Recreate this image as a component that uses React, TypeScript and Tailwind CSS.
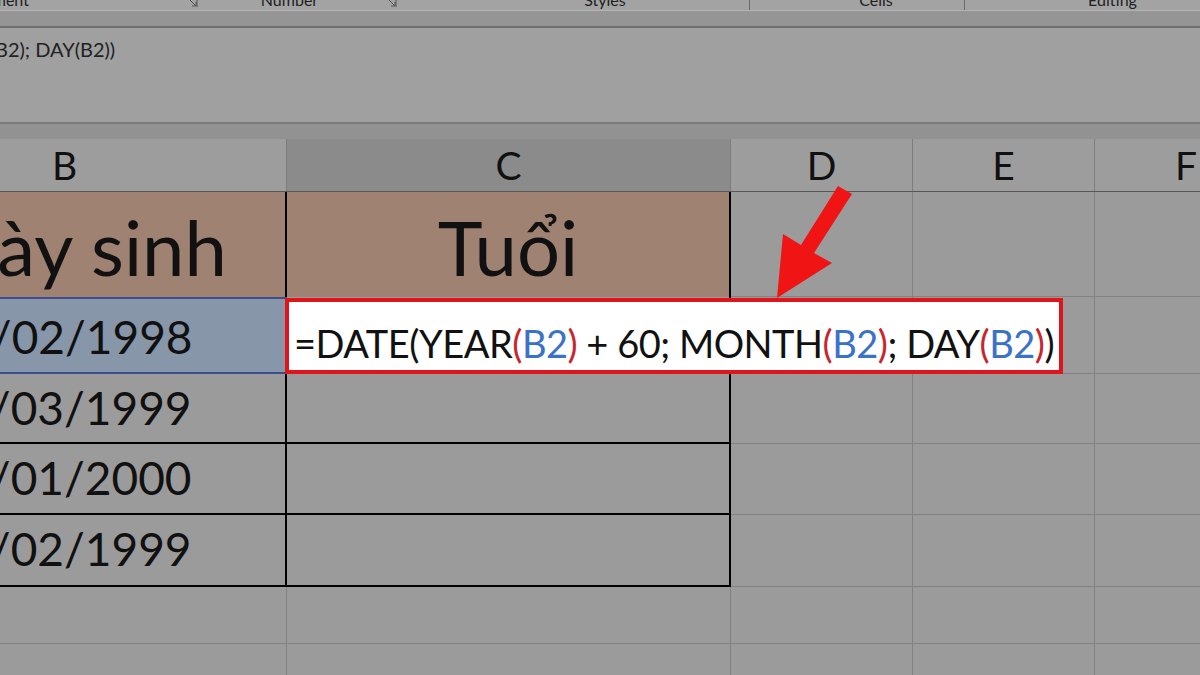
import React from "react";

const R = ({ children }: { children: React.ReactNode }) => (
  <span className="text-[#c8262e]">{children}</span>
);
const Bl = ({ children }: { children: React.ReactNode }) => (
  <span className="text-[#3a72c9]">{children}</span>
);

function Launcher() {
  return (
    <svg width="12" height="12" viewBox="0 0 12 12" className="shrink-0 -mt-[4px]">
      <path d="M1 1 H11 V11" fill="none" stroke="#555" strokeWidth="1" />
      <path d="M4 4 L10 10 M10 6 V10 H6" fill="none" stroke="#555" strokeWidth="1" />
    </svg>
  );
}

function Gray({ w, extra = "" }: { w: string; extra?: string }) {
  return <div className={`${w} shrink-0 border-r border-b border-[#828282] ${extra}`} />;
}

export default function App() {
  const dates = ["15/03/1999", "12/01/2000", "18/02/1999"];
  const heights = ["h-[70px]", "h-[71px]", "h-[72px]"];
  return (
    <div className="relative w-[1200px] h-[675px] overflow-hidden bg-[#9b9b9b] font-['Lato',sans-serif] text-[#111]">
      {/* ribbon group labels */}
      <div className="h-[11px] bg-[#a3a3a3] border-b border-[#b4b4b4] flex overflow-hidden text-[16px] leading-[16px] text-[#1e1e1e]">
        <div className="ml-[-200px] w-[410px] shrink-0 flex items-start">
          <div className="flex-1 text-center -mt-[8px]">Alignment</div>
          <Launcher />
          <div className="w-[12px]" />
        </div>
        <div className="w-[195px] shrink-0 flex items-start">
          <div className="flex-1 text-center -mt-[8px] pr-[16px]">Number</div>
          <Launcher />
          <div className="w-[8px]" />
        </div>
        <div className="w-[345px] shrink-0 flex items-start border-r border-[#6a6a6a]">
          <div className="flex-1 text-center -mt-[8px] pl-[56px]">Styles</div>
        </div>
        <div className="w-[215px] shrink-0 flex items-start border-r border-[#6a6a6a]">
          <div className="flex-1 text-center -mt-[8px] pl-[38px]">Cells</div>
        </div>
        <div className="flex-1 flex items-start">
          <div className="flex-1 text-center -mt-[8px] pl-[60px]">Editing</div>
        </div>
      </div>
      <div className="h-[17px] bg-[#959595] border-b-2 border-[#6e6e6e]" />
      {/* formula bar */}
      <div className="h-[96px] bg-[#a0a0a0] border-b-2 border-[#7a7a7a] pt-[9px] text-[20px] leading-[24px] text-[#222] whitespace-nowrap">
        <div className="ml-[-5px]">B2); DAY(B2))</div>
      </div>
      <div className="h-[15px] bg-[#929292]" />

      {/* grid */}
      <div className="ml-[-157px] flex flex-col">
        {/* column headers */}
        <div className="flex h-[53px] text-[39px] leading-[53px] border-b border-[#575757]">
          <div className="w-[444px] shrink-0 text-center bg-[#9d9d9d] border-r border-[#7e7e7e]">B</div>
          <div className="w-[444px] shrink-0 text-center bg-[#8b8b8b] border-r border-[#7e7e7e]">C</div>
          <div className="w-[182px] shrink-0 text-center bg-[#9d9d9d] border-r border-[#7e7e7e]">D</div>
          <div className="w-[182px] shrink-0 text-center bg-[#9d9d9d] border-r border-[#7e7e7e]">E</div>
          <div className="w-[182px] shrink-0 text-center bg-[#9d9d9d]">F</div>
        </div>
        {/* row 1 */}
        <div className="flex h-[105px] text-[76px] leading-[105px]">
          <div className="w-[444px] shrink-0 bg-[#9f8272] border-r-2 border-black text-center whitespace-nowrap pt-[2px]">Ngày sinh</div>
          <div className="w-[444px] shrink-0 bg-[#9f8272] border-r-2 border-black text-center pt-[2px]">Tuổi</div>
          <Gray w="w-[182px]" />
          <Gray w="w-[182px]" />
          <Gray w="w-[182px]" />
        </div>
        {/* row 2 */}
        <div className="flex h-[77px] text-[46px] leading-[76px]">
          <div className="w-[444px] shrink-0 bg-[#8796a8] border-2 border-[#3c4f8c] text-center whitespace-nowrap">12/02/1998</div>
          <div className="relative w-[444px] shrink-0 border-r-2 border-b-2 border-black">
            <div className="absolute left-[-2px] top-[1px] w-[778px] h-[76px] overflow-hidden bg-white border-4 border-[#e2141b] pl-[5px] whitespace-nowrap text-[38px] leading-[82px] tracking-[-0.5px]">
              =DATE(YEAR<R>(</R><Bl>B2</Bl><R>)</R> + 60; MONTH<R>(</R><Bl>B2</Bl><R>)</R>; DAY<R>(</R><Bl>B2</Bl><R>)</R>)
            </div>
          </div>
          <Gray w="w-[182px]" />
          <Gray w="w-[182px]" />
          <Gray w="w-[182px]" />
        </div>
        {/* rows 3-5 */}
        {dates.map((d, i) => (
          <div key={d} className={`flex ${heights[i]} text-[46px] leading-[68px]`}>
            <div className="w-[444px] shrink-0 border-r-2 border-b-2 border-black text-center whitespace-nowrap">{d}</div>
            <div className="w-[444px] shrink-0 border-r-2 border-b-2 border-black" />
            <Gray w="w-[182px]" />
            <Gray w="w-[182px]" />
            <Gray w="w-[182px]" />
          </div>
        ))}
        {/* empty rows */}
        {["h-[57px]", "h-[60px]"].map((h) => (
          <div key={h} className={`flex ${h}`}>
            <Gray w="w-[444px]" />
            <Gray w="w-[444px]" />
            <Gray w="w-[182px]" />
            <Gray w="w-[182px]" />
            <Gray w="w-[182px]" />
          </div>
        ))}
      </div>

      {/* red arrow */}
      <svg className="absolute left-0 top-0 pointer-events-none" width="1200" height="675" viewBox="0 0 1200 675">
        <polygon
          points="838,186 852,194 814,253 832,263 777,298 783,234 801,245"
          fill="#f01414"
        />
      </svg>
    </div>
  );
}
